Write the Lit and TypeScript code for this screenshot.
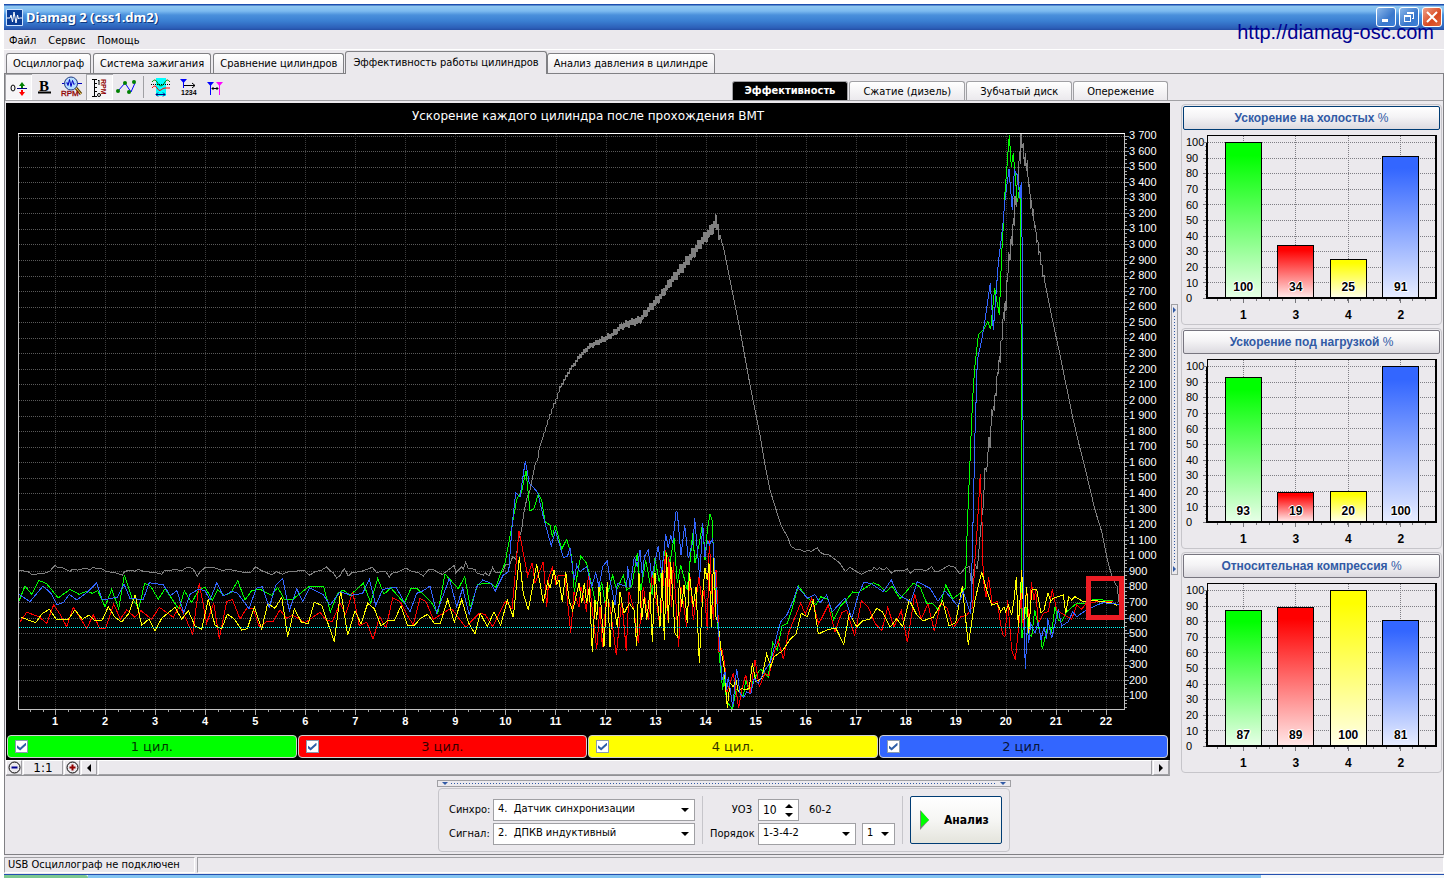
import { LitElement, html, svg, css } from "lit";
import { customElement, property, state } from "lit/decorators.js";
import { classMap } from "lit/directives/class-map.js";

/** A stretch of a trace: origin in plot pixels, then points in thirds of a pixel. */
type Segment = [number, number, string];

const FAR_LEFT: [number, number] = [-3, 417];
const RISE: [number, number] = [462, 307];
const MIDDLE: [number, number] = [682, 387];
const TAIL: [number, number] = [922, 287];
const PEAK: [number, number] = [922, -13];

const CYL1: Segment[] = [
  [...FAR_LEFT, "11,155 30,108 50,133 71,91 95,101 130,144 165,118 192,133 215,124 232,130 248,122 270,170 290,118 311,176 328,76 350,142 371,176 389,100 408,110 430,148 450,116 492,178 508,122 530,158 552,118 570,112 592,150 608,120 628,136 648,128 668,92 690,150 710,122 735,118 770,136 788,112 808,148 833,148 884,108 926,110 946,186 968,130 985,120 1005,136 1045,100 1067,158 1088,85 1107,133 1127,113 1168,160 1188,115 1205,115 1248,155 1268,190 1290,72 1330,116 1349,80 1366,172 1388,103 1425,100 1438,108"],
  [...RISE, "48,442 62,400 75,370 95,262 110,178 125,155 138,92 150,213 162,205 175,162 185,180 195,245 210,255 217,290 226,254 245,327 260,298 275,350 283,455 302,348 320,370 345,480 352,495 365,425 375,490 398,405 410,450 430,405 440,450 455,440 472,340 482,455 497,360 517,465 525,355 538,427 555,330 570,365 582,295 592,430 602,375 622,450 638,280 645,370 658,310"],
  [...MIDDLE, "8,10 15,120 22,30 30,-18 36,0 45,190 50,230 57,400 68,510 72,470 80,545 98,568 108,508 118,515 130,530 137,480 150,520 160,480 172,460 182,448 205,470 218,368 232,390 246,318 262,310 275,270 295,197 320,232 348,255 362,230 385,238 401,298 420,260 435,245 458,216 475,217 520,188 540,197 558,216 576,198 600,236 640,190 660,200 680,250 700,252 717,272"],
  [...TAIL, "17,495 38,537 60,520 76,505 82,320 95,0"],
  [...PEAK, "100,800 106,725 110,690 115,645 130,630 143,605 152,628 160,545 164,505 178,585 185,400 190,320 194,230 200,150 208,45 214,140 220,100 226,170 232,245 240,200 241,540 244,640 245,900"],
  [...TAIL, "246,655 258,560 265,640 275,650 284,570 300,640 307,688 325,610 335,635 345,560 355,600 365,605 380,575 410,550 440,550 460,538 520,542"],
];

const CYL2: Segment[] = [
  [...FAR_LEFT, "11,132 45,155 84,108 108,130 125,164 145,158 163,133 185,150 215,128 245,98 262,150 307,142 327,102 345,146 385,148 403,98 445,104 466,137 486,122 506,188 525,133 550,118 570,122 585,150 605,98 625,138 650,124 668,130 702,176 724,115 742,110 763,172 783,105 803,86 823,182 845,116 863,155 884,114 925,134 945,166 975,125 1010,136 1043,130 1063,88 1082,166 1103,118 1143,112 1185,186 1205,130 1225,122 1245,108 1265,188 1303,86 1325,170 1343,115 1363,195 1385,110 1403,90 1428,100"],
  [...RISE, "46,453 70,405 86,395 97,250 107,158 120,172 136,62 148,130 160,142 173,158 190,230 214,318 226,272 250,352 262,350 270,325 283,420 290,375 300,395 320,380 335,440 347,398 357,440 368,380 382,362 390,420 405,495 412,430 440,440 443,378 450,440 463,350 472,380 480,330 487,410 493,350 505,330 515,410 535,318 545,400 557,283 565,325 572,285 578,310 588,215 592,217 603,345 614,255 625,355 640,300 644,235 659,415"],
  [...MIDDLE, "8,10 15,110 23,60 28,75 38,55 48,200 55,320 66,480 75,455 80,510 85,470 98,560 110,446 120,520 130,533 140,515 152,522 163,475 175,490 195,450 210,430 222,385 232,340 242,305 262,283 280,240 293,202 323,235 345,224 360,248 380,225 397,275 435,234 455,295 475,225 492,186 515,192 550,215 574,180 590,215 608,232 632,245 652,185 690,205 714,244"],
  [...TAIL, "15,512 53,558 70,515 92,583 98,350 106,0"],
  [...PEAK, "107,880 112,720 125,660 135,600 151,490 160,630 175,430 188,320 195,240 207,148 217,270 223,150 232,165 240,235 244,185 248,510"],
  [...TAIL, "249,0 251,560 256,748 262,620 266,670 272,610 285,640 295,605 303,660 312,620 320,658 323,595 335,655 355,568 365,618 385,605 398,575 410,590 435,573 470,555 490,548 536,553"],
];

const CYL3: Segment[] = [
  [...FAR_LEFT, "16,215 35,187 72,200 95,220 116,164 135,193 155,230 175,172 215,235 235,195 255,236 272,234 296,162 316,207 335,180 360,202 378,182 410,208 433,172 475,202 494,168 515,212 533,252 553,100 575,220 596,158 613,266 635,155 652,148 675,207 697,172 714,176 735,235 757,213 773,216 795,180 815,205 833,195 870,218 915,187 933,210 952,215 975,160 992,193 1013,125 1033,228 1055,216 1074,268 1094,200 1113,235 1133,143 1155,155 1175,193 1195,225 1215,145 1233,155 1255,208 1303,178 1313,180 1352,232 1392,190"],
  [...RISE, "15,523 38,560 60,515 78,482 96,508 117,272 143,408 157,368 165,430 190,365 200,500 207,410 217,383 228,435 235,405 255,405 272,580 282,455 297,500 303,440 320,515 325,400 350,628 360,500 367,620 380,460 390,500 409,645 425,480 439,632 447,455 462,510 475,610 490,440 505,540 517,400 530,490 540,560 557,330 562,540 566,350 575,500 580,365 596,620 603,440 620,560 630,410 640,540 657,410"],
  [...MIDDLE, "5,245 13,210 22,330 28,60 40,300 48,150 53,250 57,395 65,385 74,430 80,520 100,460 116,565 125,510 137,465 150,520 165,420 178,500 195,460 207,468 222,400 235,360 250,418 265,340 302,250 316,282 335,235 356,312 385,255 405,335 425,278 440,270 464,348 484,242 505,262 525,310 545,332 563,262 582,320 604,272 622,367 644,222 663,298 684,252 703,333"],
  [...TAIL, "2,550 22,565 40,625 62,590 80,586 98,560 104,430 112,320 121,162 127,330 130,480 138,530 146,472 156,550 172,545 180,600 188,645 195,650 203,540 215,690 226,720 238,600 243,520 250,620 260,505 268,630 274,485 282,540 287,510 295,610 310,580 325,575 337,508 350,570 365,580 395,598 410,555 425,568 440,548 475,545 520,543"],
];

const CYL4: Segment[] = [
  [...FAR_LEFT, "18,202 62,218 80,192 103,178 124,208 160,208 180,180 202,208 222,195 240,212 262,210 280,170 300,202 320,216 342,190 360,134 380,226 402,207 420,242 440,205 480,172 500,208 520,182 540,228 560,238 580,148 600,226 620,236 637,193 657,206 680,240 697,236 718,172 740,238 758,160 780,175 800,142 818,260 838,176 860,218 880,220 898,157 920,166 958,275 977,122 998,256 1020,182 1038,222 1058,160 1078,176 1098,228 1118,212 1138,212 1158,168 1178,227 1198,226 1218,204 1238,193 1258,220 1276,220 1298,148 1318,216 1340,148 1360,217 1380,252 1396,190"],
  [...RISE, "22,560 42,516 62,555 82,480 100,532 118,350 130,460 145,510 170,372 190,488 203,425 210,445 222,390 230,432 237,420 247,485 257,395 268,485 278,512 297,430 305,490 313,430 320,490 328,440 337,636 345,480 350,540 358,425 372,620 382,425 390,622 398,480 412,560 420,455 432,520 448,490 462,510 470,618 477,400 485,540 493,470 500,540 510,455 517,605 525,400 540,560 546,390 553,600 560,340 565,550 572,365 585,580 592,590 598,420 605,500 612,435 622,550 628,400 640,500 648,440 658,668"],
  [...MIDDLE, "8,220 15,145 22,180 27,130 34,320 41,100 48,290 55,310 62,385 72,440 82,563 90,488 100,500 108,480 115,515 125,505 135,510 148,505 157,430 168,485 185,475 200,402 212,440 222,410 248,392 270,358 288,342 304,280 322,290 340,242 355,342 385,328 408,325 431,373 448,280 470,320 488,302 510,298 530,265 547,275 570,322 590,296 608,320 628,240 650,285 668,303 700,292"],
  [...TAIL, "8,542 27,618 47,608 67,498 85,675 105,540 125,455 140,510 155,555 172,550 182,575 192,560 197,575 205,555 215,585 222,540 229,472 235,620 240,540 245,450 252,600 260,500 266,640 275,510 290,508 303,580 312,570 324,518 332,545 340,535 370,525 377,580 386,530 395,540 405,530 430,545 450,540 490,545 520,550 530,556"],
];

const RPM_IDLE: Segment[] = [
  [...FAR_LEFT, "11,62 25,62 30,66 38,64 50,73 84,71 104,64 120,46 128,52 145,54 165,65 172,57 180,57 187,61 212,54 225,60 232,53 250,55 262,57 272,64 300,68 322,75 330,64 350,60 360,64 370,58 388,65 418,67 440,73 450,60 470,60 476,57 500,62 516,52 533,55 547,78 556,65 570,53 600,54 625,62 640,57 655,61 690,68 708,66 722,50 740,62 770,74 785,65 802,73 825,63 840,66 850,61 870,63 884,76 900,65 920,60 934,51 945,62 955,68 965,84 975,77 988,55 1000,78 1010,68 1040,64 1072,52 1085,68 1100,64 1112,64 1123,82 1130,70 1150,66 1172,54 1190,64 1210,68 1225,78 1240,60 1254,58 1270,68 1282,73 1318,46 1322,68 1340,50 1345,58 1352,37 1360,55 1380,58 1384,68 1405,75"],
  [...RISE, "15,398 27,408 38,381 46,398 70,395 76,375 90,372 98,350 108,358 115,300 125,270 132,215 142,170 150,150 160,100 166,70 173,60 178,25 186,0"],
];
const RPM_FALL: Segment[] = [
  [0, 0, "2106,306 2118,351 2142,471 2166,591 2196,756 2226,906 2241,996 2256,1071"],
  [...MIDDLE, "238,0 245,20 265,55 272,78 290,90 300,88 312,95 325,90 332,95 352,83 360,97 375,104 383,102 405,118 420,130 436,155 450,142 470,155 485,163 505,153 515,152 522,142 530,150 538,143 550,150 560,143 575,160 586,151 610,152 622,146 632,160 645,148 680,151 695,140 705,155 712,156"],
  [...TAIL, "0,452 25,437 45,442 60,463 75,444 88,440 95,500 104,430 112,448 125,290 130,258 135,145 140,155 147,50 150,85 154,0"],
];
const RPM_LOAD: Segment[] = [[0, 0, "1572,921 1596,846 1614,801 1626,765 1656,711 1686,669 1716,639 1746,624 1782,606 1812,579 1836,570 1866,561 1896,525 1926,492 1962,441 1992,405 2022,366 2052,324 2076,297 2094,267 2106,306"]];
const RPM_PEAK_UP: Segment[] = [[...PEAK, "155,885 160,870 168,815 175,745 183,680 190,605 198,540 203,465 210,400 217,340 225,270 232,200 238,120 243,85"]];
const RPM_PEAK_TOP: Segment[] = [[...PEAK, "243,85 246,60 250,90 262,150 272,240 280,290 290,350 300,410 315,490"]];
const RPM_PEAK_DOWN: Segment[] = [
  [...PEAK, "315,490 330,565 345,635 360,705 375,780 388,840 400,900"],
  [...TAIL, "415,65 440,165 465,270 485,335 500,410 515,468 525,490 532,500 536,545"],
];

type Point = [number, number];

const resolve = (segments: Segment[]): Point[] =>
  segments.flatMap(([ox, oy, text]) =>
    text.split(" ").map((pair): Point => {
      const [x, y] = pair.split(",").map(Number);
      return [ox + x / 3, oy + y / 3];
    }),
  );

/** Adds the fast saw-tooth that the crankshaft speed shows under load. */
const ripple = (points: Point[], from: number, to: number): Point[] => {
  const out: Point[] = [];
  let n = 0;
  for (let i = 1; i < points.length; i++) {
    const [x0, y0] = points[i - 1];
    const [x1, y1] = points[i];
    const steps = Math.max(1, Math.round(x1 - x0));
    for (let s = 0; s < steps; s++, n++) {
      const t = s / steps;
      const progress = (i - 1 + t) / (points.length - 1);
      const amp = (from + (to - from) * progress) * (n % 3 === 0 ? 1 : 0.6);
      out.push([x0 + (x1 - x0) * t, Math.max(1, y0 + (y1 - y0) * t + (n % 2 ? amp : -amp))]);
    }
  }
  return out;
};

const toPoints = (points: Point[]) => points.map(([x, y]) => `${x.toFixed(1)},${y.toFixed(1)}`).join(" ");

const RPM = [
  ...resolve(RPM_IDLE),
  ...ripple(resolve(RPM_LOAD), 1, 8),
  ...resolve(RPM_FALL),
  ...ripple(resolve(RPM_PEAK_UP), 6, 16),
  ...ripple(resolve(RPM_PEAK_TOP), 14, 4),
  ...resolve(RPM_PEAK_DOWN),
];

const CYLINDERS = [
  { id: 1, tone: "green", points: toPoints(resolve(CYL1)) },
  { id: 3, tone: "red", points: toPoints(resolve(CYL3)) },
  { id: 4, tone: "yellow", points: toPoints(resolve(CYL4)) },
  { id: 2, tone: "blue", points: toPoints(resolve(CYL2)) },
];

const range = (n: number) => Array.from({ length: n }, (_, i) => i);

const tones = css`
  .green { --tone: #00ff00; --pale: #e6ffe6; }
  .red { --tone: #ff0000; --pale: #ffe6e6; }
  .yellow { --tone: #ffff00; --pale: #ffffe6; }
  .blue { --tone: #3366ff; --pale: #e6ecff; }
`;

@customElement("scope-chart")
export class ScopeChart extends LitElement {
  @state() private hidden_: number[] = [];

  static styles = [
    tones,
    css`
      :host { display: flex; flex-direction: column; background: #000; color: #fff; min-width: 0; }
      h2 { margin: 0; padding-top: 4px; height: 30px; box-sizing: border-box; font: 12px/18px "DejaVu Sans", sans-serif; text-align: center; }
      .body { flex: 1; display: grid; grid-template-columns: minmax(0, 1fr) 45px; grid-template-rows: minmax(0, 1fr) 24px; padding-left: 12px; }
      .plot { width: 100%; height: 100%; contain: size; overflow: visible; display: block; }
      .plot * { vector-effect: non-scaling-stroke; }
      .grid-h { stroke: #5a5a5a; stroke-dasharray: 1 1; }
      .grid-v { stroke: #3c3c3c; stroke-dasharray: 1 1; }
      .tick { stroke: #a8a8a8; }
      .edge { stroke: #c0c0c0; fill: none; }
      .top { stroke: #fff; }
      .level { stroke: #00ffff; stroke-dasharray: 1 1; }
      .rpm { stroke: #808080; fill: none; }
      .trace { stroke: var(--tone); fill: none; }
      .mark { stroke: #ed1c24; stroke-width: 5px; fill: none; }
      .y-axis { display: grid; grid-template-rows: repeat(37, minmax(0, 1fr)); margin: -5px 0 6px; padding-left: 4px; font: 11px/15px "Liberation Sans", sans-serif; white-space: nowrap; }
      .x-axis { grid-column: 1 / -1; display: grid; grid-template-columns: repeat(22, minmax(0, 1fr)); margin-right: 39px; padding-left: 12px; font: bold 11px/22px "Liberation Sans", sans-serif; text-align: center; }
      .legend { display: grid; grid-template-columns: repeat(4, 1fr); gap: 1px; padding: 1px 2px 2px 1px; }
      label { display: grid; grid-template-columns: 14px 1fr 14px; align-items: center; height: 23px; box-sizing: border-box; padding: 0 7px; border: 1px solid #d0d0d0; border-radius: 4px; background: var(--tone); color: #000; font: 13px/20px "DejaVu Sans", sans-serif; text-align: center; }
      input { appearance: none; margin: 0; width: 13px; height: 13px; background: #fff; border: 1px solid #8a9bb0; display: grid; place-items: center; }
      input:checked::after { content: ""; width: 9px; height: 8px; background: #2f5fa8; clip-path: polygon(0 35%, 35% 65%, 100% 0, 100% 35%, 35% 100%, 0 70%); }
      span { opacity: 0.8; }
    `,
  ];

  private toggle(id: number) {
    this.hidden_ = this.hidden_.includes(id) ? this.hidden_.filter((v) => v !== id) : [...this.hidden_, id];
  }

  render() {
    const gy = (i: number) => Math.round(2.5 + i * 15.56) + 0.5;
    const gx = (i: number) => Math.round(37 + i * 50.05) + 0.5;
    return html`
      <h2>Ускорение каждого цилиндра после прохождения ВМТ</h2>
      <div class="body">
        <svg class="plot" viewBox="0 0 1107 577" preserveAspectRatio="none" shape-rendering="crispEdges" role="img" aria-label="Ускорение">
          ${range(37).map((i) => svg`<line class="grid-h" x1="1" x2="1106" y1=${gy(i)} y2=${gy(i)} />`)}
          ${range(22).map((i) => svg`<line class="grid-v" y1="1" y2="576" x1=${gx(i)} x2=${gx(i)} />`)}
          ${range(148).map((i) => svg`<line class="tick" x1="1107" x2=${i % 4 ? 1109 : 1111} y1=${Math.round(2.5 + i * 3.89) + 0.5} y2=${Math.round(2.5 + i * 3.89) + 0.5} />`)}
          ${range(87).map((i) => svg`<line class="tick" y1="577" y2=${(i + 2) % 4 ? 579 : 582} x1=${Math.round(12 + i * 12.51) + 0.5} x2=${Math.round(12 + i * 12.51) + 0.5} />`)}
          <polyline class="rpm" points=${toPoints(RPM)} />
          ${CYLINDERS.filter((c) => !this.hidden_.includes(c.id)).map(
            (c) => svg`<polyline class="trace ${c.tone}" points=${c.points} />`,
          )}
          <line class="level" x1="1" x2="1106" y1="494.5" y2="494.5" />
          <polyline class="edge" points="0.5,0 0.5,576.5 1106.5,576.5 1106.5,0" />
          <line class="edge top" x1="0" x2="1107" y1="0.5" y2="0.5" />
          <rect class="mark" x="1070.5" y="445.5" width="33" height="39" />
        </svg>
        <div class="y-axis">
          ${range(37).map((i) => {
            const v = 3700 - i * 100;
            return html`<div>${v >= 1000 ? `${Math.floor(v / 1000)} ${String(v % 1000).padStart(3, "0")}` : v}</div>`;
          })}
        </div>
        <div class="x-axis">${range(22).map((i) => html`<div>${i + 1}</div>`)}</div>
      </div>
      <div class="legend">
        ${CYLINDERS.map(
          (c) => html`<label class=${c.tone}>
            <input type="checkbox" .checked=${!this.hidden_.includes(c.id)} @change=${() => this.toggle(c.id)} />
            <span>${c.id} цил.</span>
          </label>`,
        )}
      </div>
    `;
  }
}

@customElement("bar-panel")
export class BarPanel extends LitElement {
  @property() heading = "";
  @property({ type: Array }) values: number[] = [];
  @property({ type: Boolean }) active = false;

  static styles = [
    tones,
    css`
      :host { display: block; box-sizing: border-box; height: 221px; padding: 1px; border: 1px solid #c6c5ca; border-radius: 4px; }
      button { display: block; width: 100%; height: 24px; padding: 0; border: 1px solid #77757f; border-radius: 2px; background: linear-gradient(#fff, #f4f3f5 45%, #dcdae0); color: #315aa5; font: bold 12px/20px "Liberation Sans", sans-serif; }
      button.active { border-color: #003c74; }
      b { font-weight: 400; }
      .body { display: grid; grid-template-columns: 21px minmax(0, 1fr); grid-template-rows: 172px 14px; padding: 4px 3px 0; color: #000; }
      .scale { display: grid; grid-template-rows: repeat(11, minmax(0, 1fr)); font: 11px/16px "Liberation Sans", sans-serif; }
      .plot { display: grid; grid-template: 164px / minmax(0, 1fr); margin-top: 1px; }
      .plot > * { grid-area: 1 / 1; }
      svg { width: 100%; height: 164px; overflow: visible; }
      svg * { vector-effect: non-scaling-stroke; }
      .grid { stroke: #7e7e84; stroke-dasharray: 1 1; }
      .tick { stroke: #77777c; }
      .frame { fill: none; stroke: #000; }
      .axis { stroke: #000; stroke-width: 2px; }
      .bars { display: grid; grid-template-columns: repeat(4, minmax(0, 1fr)); align-items: end; justify-items: center; padding: 7px 10px 1px; height: 156px; }
      .bar { display: grid; align-items: end; box-sizing: border-box; width: 37px; border: 1px solid #000; background: linear-gradient(var(--tone), var(--tone) 8%, var(--pale)); text-align: center; font: bold 12px/20px "Liberation Sans", sans-serif; text-shadow: 1px 1px #fff, -1px 0 #fff, 0 -1px #fff, 1px 0 #fff; }
      .names { grid-column: 2; display: grid; grid-template-columns: repeat(4, minmax(0, 1fr)); padding: 0 10px; text-align: center; font: bold 12px/18px "Liberation Sans", sans-serif; }
    `,
  ];

  render() {
    const y = (i: number) => Math.round(7 + i * 15.6) + 0.5;
    const centers = [36.5, 88.5, 141.5, 193.5];
    return html`
      <button class=${classMap({ active: this.active })}>${this.heading} <b>%</b></button>
      <div class="body">
        <div class="scale">${range(11).map((i) => html`<div>${100 - i * 10}</div>`)}</div>
        <div class="plot">
          <svg viewBox="0 0 230 164" preserveAspectRatio="none" shape-rendering="crispEdges" aria-hidden="true">
            ${range(10).map((i) => svg`<line class="grid" x1="1" x2="228" y1=${y(i)} y2=${y(i)} />`)}
            ${centers.map((x) => svg`<line class="grid" y1="1" y2="162" x1=${x} x2=${x} /><line class="tick" y1="164" y2="168" x1=${x} x2=${x} />`)}
            ${range(41).map((i) => svg`<line class="tick" x1=${i % 4 ? -2 : -4} x2="0" y1=${Math.round(7 + i * 3.9) + 0.5} y2=${Math.round(7 + i * 3.9) + 0.5} />`)}
            ${range(17).map((i) => svg`<line class="tick" y1="164" y2="166" x1=${10.5 + i * 13} x2=${10.5 + i * 13} />`)}
            <polyline class="frame" points="0.5,163 0.5,0.5 229,0.5" />
            <polyline class="frame axis" points="229,0 229,163 0,163 0,8" />
          </svg>
          <div class="bars">
            ${CYLINDERS.map(
              (c, i) => html`<div class="bar ${c.tone}" style="height:${this.values[i]}%">${this.values[i]}</div>`,
            )}
          </div>
        </div>
        <div class="names">${CYLINDERS.map((c) => html`<div>${c.id}</div>`)}</div>
      </div>
    `;
  }
}

const TABS = ["Осциллограф", "Система зажигания", "Сравнение цилиндров", "Эффективность работы цилиндров", "Анализ давления в цилиндре"];
const SUBTABS = ["Эффективность", "Сжатие (дизель)", "Зубчатый диск", "Опережение"];

const TOOLS = [
  {
    name: "Сброс нуля",
    on: true,
    icon: svg`<ellipse cx="8" cy="14" rx="2" ry="3" fill="none" stroke="#000"/><path d="M12 14.500h10" stroke="#000080"/><path d="M17 8l3 4h-2v2h-2v-2h-2z" fill="#008000"/><path d="M17 22l3-4h-2v-2h-2v2h-2z" fill="#f00"/>`,
  },
  {
    name: "Жирные линии",
    icon: svg`<text x="7" y="17" font-family="Liberation Serif" font-weight="bold" font-size="15">B</text><path d="M6 18.500h13" stroke="#000" stroke-width="2"/>`,
  },
  {
    name: "Масштаб оборотов",
    icon: svg`<path d="M3 9.500h20" stroke="#0000c0"/><circle cx="12" cy="9.500" r="6.500" fill="#b4dcff" stroke="#203880"/><path d="M7 9.500l1-1 1 3 1.500-6 1.500 7 1.500-6 1.500 4 1-1" fill="none" stroke="#0000c0"/><path d="M17 14l5 6" stroke="#5a4000" stroke-width="3"/><path d="M17 14l5 6" stroke="#ffd870"/><text x="2" y="22" font-family="Liberation Sans" font-size="8" fill="#900000" stroke="#900000" stroke-width=".3">RPM</text>`,
  },
  {
    name: "Шкала оборотов",
    on: true,
    icon: svg`<path d="M6 5.500h5M6 22.500h5M8.500 5v18M9 9.500h2M9 13.500h2M9 17.500h2" stroke="#000" fill="none"/><path d="M12 7l1-1v5" stroke="#000" fill="none"/><circle cx="13" cy="21" r="1.500" fill="none" stroke="#000"/><text transform="translate(15 5) rotate(90)" font-family="Liberation Sans" font-weight="bold" font-size="7" fill="#900000">RPM</text>`,
  },
  {
    name: "Точки",
    icon: svg`<path d="M5 17l7-8 6 9 4-9" stroke="#0000ff" fill="none"/><g fill="#008000"><circle cx="5" cy="17" r="2"/><circle cx="12" cy="9" r="2"/><circle cx="16" cy="18" r="2"/><circle cx="21" cy="8" r="2"/></g>`,
  },
  {
    name: "Окно",
    icon: svg`<path d="M9 4h10v18H9z" fill="#0ff"/><path d="M5 8q3-4 5 0t4 4t4-4t5 0" stroke="#008000" fill="none"/><path d="M4 10.500h19" stroke="#000" stroke-dasharray="1 1"/><path d="M5 14q3-4 5 0t4 2t4-2t5 0" stroke="#f00" fill="none"/><path d="M9 20.500h9M11 18.500l-2 2 2 2M16 18.500l2 2-2 2" stroke="#000080" fill="none"/>`,
  },
  {
    name: "Порядок меток",
    icon: svg`<path d="M6 5h7l-3 3.500V14H9V8.500z" fill="#00f"/><path d="M10 11.500h11M18 9l3 2.500-3 2.500" stroke="#000" fill="none"/><text x="7" y="21" font-family="Liberation Sans" font-weight="bold" font-size="7">1234</text>`,
  },
  {
    name: "Интервал",
    icon: svg`<path d="M6 8h7l-3 3.500V21H9V11.500z" fill="#00f"/><path d="M15 8h7l-3 3.500V21h-1V11.500z" fill="#f0f"/><path d="M11 14.500h6M12.500 13l-1.500 1.500 1.500 1.500M15.500 13l1.500 1.500-1.500 1.500" stroke="#000" fill="none"/>`,
  },
];

@customElement("app-root")
export class AppRoot extends LitElement {
  @state() private tab = 3;
  @state() private subtab = 0;
  @state() private advance = 10;

  static styles = css`
    :host { display: flex; flex-direction: column; min-height: 100vh; box-sizing: border-box; padding: 4px 4px 0; position: relative; background: #fff; color: #000; font: 11px/14px "DejaVu Sans Condensed", "Liberation Sans", sans-serif; --face: #ebe9ed; }
    button, select, input { font: inherit; color: inherit; }
    button { padding: 0; }

    .title { display: flex; align-items: center; gap: 3px; height: 26px; padding: 0 2px; background: linear-gradient(#1d4eae 0 1px, #90c8f0 2px, #7cbaf0 7px, #4a90dc 11px, #3a7fd2 17px, #2c5fb8 24px, #244ea4); color: #fff; }
    .title h1 { flex: 1; margin: 0; font: bold 13px/20px "Noto Sans", sans-serif; text-shadow: 1px 1px #123a80; }
    .title svg { display: block; }
    .win { display: grid; place-items: center; width: 20px; height: 20px; border: 1px solid #fff; border-radius: 3px; background: linear-gradient(135deg, #8cb8ea, #3a78cc 60%, #3c80d8); }
    .close { background: linear-gradient(135deg, #f0a088, #d84820 60%, #e06840); }
    .site { position: absolute; right: 14px; top: 20px; color: #000090; font: 20px/24px "Liberation Sans", sans-serif; text-decoration: none; }

    .menu { display: flex; gap: 12px; height: 19px; padding: 0 5px; background: var(--face); border-bottom: 1px solid #fff; }
    .menu button { border: 0; background: none; line-height: 22px; }

    .frame { flex: 1; display: flex; flex-direction: column; background: var(--face); }
    .tabs { display: flex; align-items: flex-end; gap: 2px; height: 24px; padding-left: 2px; border-bottom: 1px solid #808084; box-sizing: border-box; }
    .tab { height: 20px; padding: 0 6px; border: 1px solid #808084; border-bottom: 0; border-radius: 3px 3px 0 0; background: linear-gradient(#fff, var(--face)); white-space: nowrap; }
    .tab.on { height: 23px; margin: 0 -2px -1px -1px; padding: 0 7px 1px; background: var(--face); }

    .page { flex: 1; display: flex; flex-direction: column; border: 1px solid #808084; border-top: 0; }
    .tools { display: flex; align-items: flex-end; height: 27px; box-sizing: border-box; border-bottom: 1px solid #a0a0a4; }
    .tool { width: 27px; height: 26px; border: 0; background: none; }
    .tool.on { box-shadow: inset 1px 1px #a8a8ac, inset -1px -1px #fff; background: #f6f5f7; }
    .tool svg { display: block; }
    .rule { align-self: center; width: 1px; height: 22px; margin: 0 3px; background: #a0a0a4; }
    .subtabs { display: flex; gap: 1px; margin: 0 275px 0 auto; }
    .subtab { height: 19px; padding: 1px 13px 0; border: 1px solid #a0a0a4; border-bottom: 0; border-radius: 3px 3px 0 0; background: linear-gradient(#fff, var(--face)); }
    .subtab.on { padding: 0 12px; background: #000; color: #fff; font-weight: bold; }

    .work { flex: 1; display: grid; grid-template-columns: minmax(0, 1fr) 11px 261px; padding: 2px 1px 0; }
    .left { display: flex; flex-direction: column; }
    scope-chart { flex: 1; }
    .scroll { display: flex; gap: 1px; height: 16px; box-sizing: border-box; border-right: 1px solid #a0a0a4; border-bottom: 1px solid #909094; }
    .scroll button { width: 16px; border: 1px solid; border-color: #fff #a0a0a4 #a0a0a4 #fff; background: var(--face); display: grid; place-items: center; }
    .zoom { width: 38px; border: 1px solid; border-color: #fff #a0a0a4 #a0a0a4 #fff; font: 12px/14px "DejaVu Sans", sans-serif; text-align: center; }
    .track { flex: 1; border: 1px solid; border-color: #fff #a0a0a4 #a0a0a4 #fff; }

    .grip { display: flex; align-items: center; justify-content: space-between; gap: 3px; border: 1px solid #a0a0a4; }
    .grip i { width: 0; height: 0; border: 3px solid transparent; }
    .grip u { flex: 1; text-decoration: none; }
    .side-grip { flex-direction: column; align-self: center; width: 5px; height: 265px; padding: 2px 0; margin: 0 auto 0 1px; }
    .side-grip i { border-left-color: #315aa5; border-right-width: 0; }
    .side-grip u { width: 1px; background: repeating-linear-gradient(#315aa5 0 1px, transparent 1px 3px); }
    .foot-grip { width: 564px; height: 5px; padding: 0 4px; }
    .foot-grip i { border-top-color: #315aa5; border-bottom-width: 0; }
    .foot-grip u { height: 1px; background: repeating-linear-gradient(90deg, #315aa5 0 1px, transparent 1px 3px); }
    .panels { display: flex; flex-direction: column; gap: 3px; padding-top: 1px; }

    .foot { display: flex; flex-direction: column; align-items: center; padding: 4px 0 2px; gap: 1px; }
    .group { display: flex; gap: 7px; padding: 7px 7px 6px; border: 1px solid #c6c5ca; border-radius: 4px; }
    .fields { display: grid; align-items: center; gap: 2px 4px; padding-top: 3px; }
    .inputs { grid-template-columns: 40px 202px; padding-left: 3px; }
    .timing { grid-template-columns: 42px 98px 33px; gap: 2px 6px; }
    .timing label { text-align: right; }
    .timing span { margin-left: -53px; }
    .bar { width: 1px; height: 48px; background: #c6c5ca; }
    .pick { position: relative; display: grid; }
    .pick::after { content: ""; position: absolute; right: 6px; top: 9px; border: 4px solid transparent; border-top-color: #000; border-bottom-width: 0; pointer-events: none; }
    select, .spin { appearance: none; box-sizing: border-box; width: 100%; height: 22px; padding: 0 4px; border: 1px solid #a0a0a4; border-radius: 0; background: #fff; }
    select { padding: 0 18px 2px 4px; white-space: pre; }
    .spin { display: grid; grid-template: 9px 9px / 1fr 11px; align-content: center; width: 41px; }
    .spin input { grid-row: 1 / 3; min-width: 0; width: 18px; padding: 0; border: 0; outline: 0; background: none; font-size: 12px; appearance: textfield; }
    .spin input::-webkit-inner-spin-button { display: none; }
    .spin button { display: grid; place-items: center; border: 0; background: none; }
    .run { display: flex; align-items: center; gap: 14px; width: 92px; height: 48px; padding: 0 9px; border: 1px solid #003c74; border-radius: 2px; background: linear-gradient(#fff, #f6f6f4 50%, #e4e4dc); font-weight: bold; font-size: 12px; }

    .status { display: flex; gap: 2px; height: 16px; padding: 2px 0 1px; background: var(--face); }
    .status div { border: 1px solid; border-color: #a0a0a4 #fff #fff #a0a0a4; box-sizing: border-box; padding-left: 3px; width: 191px; white-space: nowrap; }
    .status div:last-child { flex: 1; }
    .task { display: flex; height: 3px; border-top: 1px solid #2450b0; background: #f2f8fc; }
    .task b { width: 84px; background: #7cc890; border-radius: 0 3px 0 0; }
    .task i { width: 1173px; background: #84c4f0; }
  `;

  render() {
    return html`
      <header class="title">
        <svg width="17" height="17" viewBox="0 0 17 17"><path d="M.5.5h16v16H.5z" fill="#0a3c96" stroke="#cfe4ff"/><path d="M1 9h3l1-3 1.500 7L8 3l2 11 1.500-8 1 4 1-1H16" fill="none" stroke="#fff"/></svg>
        <h1>Diamag 2 (css1.dm2)</h1>
        <button class="win" aria-label="Свернуть"><svg width="14" height="14"><path d="M3 10.500h6" stroke="#fff" stroke-width="3"/></svg></button>
        <button class="win" aria-label="Восстановить"><svg width="14" height="14" fill="none" stroke="#fff" shape-rendering="crispEdges"><path d="M5.500 4V2.500h6v6H10M5 3h7M2.500 5.500h6v6h-6zM2 6h7"/></svg></button>
        <button class="win close" aria-label="Закрыть"><svg width="14" height="14"><path d="M2 2l10 10M12 2L2 12" stroke="#fff" stroke-width="2"/></svg></button>
      </header>
      <a class="site" href="http://diamag-osc.com">http://diamag-osc.com</a>
      <nav class="menu"><button>Файл</button><button>Сервис</button><button>Помощь</button></nav>
      <main class="frame">
        <div class="tabs" role="tablist">
          ${TABS.map((t, i) => html`<button role="tab" class=${classMap({ tab: true, on: i === this.tab })} @click=${() => (this.tab = i)}>${t}</button>`)}
        </div>
        <div class="page">
          <div class="tools">
            ${TOOLS.map(
              (t, i) => html`${i === 5 ? html`<div class="rule"></div>` : ""}
                <button class=${classMap({ tool: true, on: !!t.on })} aria-label=${t.name}><svg width="27" height="26" viewBox="0 0 27 26">${t.icon}</svg></button>`,
            )}
            <div class="subtabs" role="tablist">
              ${SUBTABS.map((t, i) => html`<button role="tab" class=${classMap({ subtab: true, on: i === this.subtab })} @click=${() => (this.subtab = i)}>${t}</button>`)}
            </div>
          </div>
          <div class="work">
            <div class="left">
              <scope-chart></scope-chart>
              <div class="scroll">
                <button aria-label="Уменьшить"><svg width="13" height="13" fill="none"><circle cx="6.500" cy="6.500" r="5.500" stroke="#000"/><path d="M3.500 6.500h6" stroke="#000090" stroke-width="2"/></svg></button>
                <div class="zoom">1:1</div>
                <button aria-label="Увеличить"><svg width="13" height="13" fill="none"><circle cx="6.500" cy="6.500" r="5.500" stroke="#000"/><path d="M3.500 6.500h6M6.500 3.500v6" stroke="#900000" stroke-width="2"/></svg></button>
                <button aria-label="Влево"><svg width="8" height="8"><path d="M6 0v8L2 4z"/></svg></button>
                <div class="track"></div>
                <button aria-label="Вправо"><svg width="8" height="8"><path d="M2 0v8l4-4z"/></svg></button>
              </div>
            </div>
            <div class="grip side-grip"><i></i><u></u><i></i></div>
            <aside class="panels">
              <bar-panel heading="Ускорение на холостых" .values=${[100, 34, 25, 91]} active></bar-panel>
              <bar-panel heading="Ускорение под нагрузкой" .values=${[93, 19, 20, 100]}></bar-panel>
              <bar-panel heading="Относительная компрессия" .values=${[87, 89, 100, 81]}></bar-panel>
            </aside>
          </div>
          <footer class="foot">
            <div class="grip foot-grip"><i></i><u></u><i></i></div>
            <div class="group">
              <div class="fields inputs">
                <label for="sync">Синхро:</label>
                <div class="pick"><select id="sync"><option>4.&nbsp; Датчик синхронизации</option></select></div>
                <label for="signal">Сигнал:</label>
                <div class="pick"><select id="signal"><option>2.&nbsp; ДПКВ индуктивный</option></select></div>
              </div>
              <div class="bar"></div>
              <div class="fields timing">
                <label for="advance">УОЗ</label>
                <div class="spin">
                  <input id="advance" type="number" .value=${String(this.advance)} @change=${(e: Event) => (this.advance = Number((e.target as HTMLInputElement).value))} />
                  <button aria-label="Больше" @click=${() => this.advance++}><svg width="8" height="4"><path d="M0 4h8L4 0z"/></svg></button>
                  <button aria-label="Меньше" @click=${() => this.advance--}><svg width="8" height="4"><path d="M0 0h8L4 4z"/></svg></button>
                </div>
                <span>60-2</span>
                <label for="order">Порядок</label>
                <div class="pick"><select id="order"><option>1-3-4-2</option></select></div>
                <div class="pick"><select aria-label="Первый цилиндр"><option>1</option></select></div>
              </div>
              <div class="bar"></div>
              <button class="run"><svg width="10" height="20"><path d="M0 0v20l9-10z" fill="#808080"/><path d="M1 1v16l8-7z" fill="#0f0"/></svg>Анализ</button>
            </div>
          </footer>
        </div>
      </main>
      <div class="status"><div>USB Осциллограф не подключен</div><div></div></div>
      <div class="task"><b></b><i></i></div>
    `;
  }
}
